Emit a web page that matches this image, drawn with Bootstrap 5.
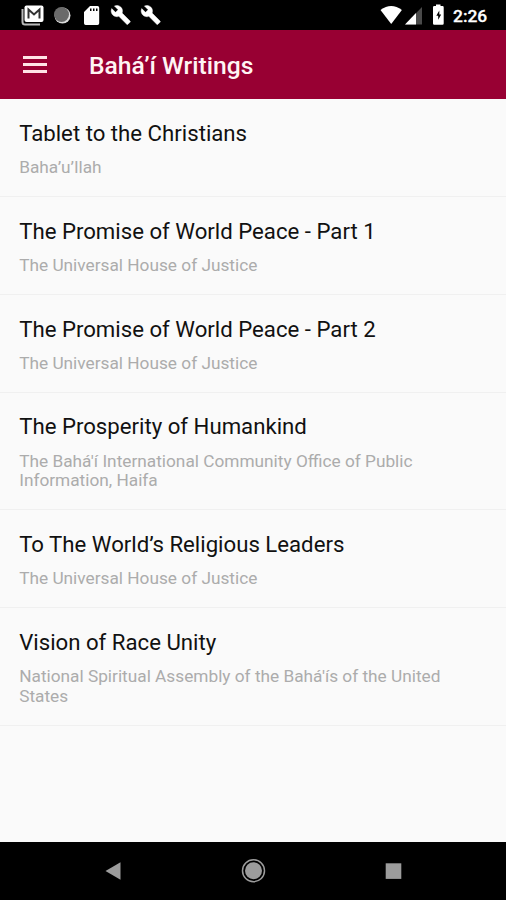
<!DOCTYPE html>
<html lang="en">
<head>
<meta charset="utf-8">
<meta name="viewport" content="width=device-width, initial-scale=1">
<title>Bahá’í Writings</title>
<link href="https://cdn.jsdelivr.net/npm/bootstrap@5.3.0/dist/css/bootstrap.min.css" rel="stylesheet">
<style>
  body { font-family: Roboto, "Liberation Sans", sans-serif; background: #fafafa; height: 900px; }
  .status-bar { height: 30px; background: #000; }
  .status-bar svg, .nav-keys svg { display: block; width: 100%; }
  .status-bar text { font-size: 17.4px; font-weight: 500; stroke: #fff; stroke-width: .3px; }
  .app-bar { height: 68.5px; background: #980033; padding: 3px 22px 0 23px; }
  .menu-btn { width: 24px; margin-top: -2px; }
  .app-title { font-size: 24.65px; font-weight: 500; line-height: 30px; margin-left: 42px; color: #fff4f4; }
  .writings { padding-top: .9px; }
  .writing { padding: 20.7px 19px 18.1px 19.2px; border-bottom: 1px solid #f0f0f0; }
  .writing-title { font-size: 22.2px; line-height: 26px; margin-bottom: 12.2px; color: #111; }
  .writing-author { font-size: 17.25px; line-height: 19.8px; color: #acacac; }
  .nav-keys { height: 58px; background: #000; }
</style>
</head>
<body class="d-flex flex-column overflow-hidden">
  <div class="status-bar flex-shrink-0">
    <svg height="30" viewBox="0 0 506 30" fill="#fff">
      <path d="M22.500 9v13q0 2.500 2.500 2.500H40" fill="none" stroke="#bbb" stroke-width="2"/>
      <rect x="24.500" y="5.500" width="19" height="16.500" rx="2"/>
      <path d="M28.500 18.500V9.500l5.500 5 5.500-5v9" fill="none" stroke="#333" stroke-width="2"/>
      <circle cx="62.500" cy="15.500" r="8" fill="#ddd"/>
      <circle cx="61.500" cy="14.500" r="7.500" fill="#6a6a6a"/>
      <path fill-rule="evenodd" d="M90 6h7.500q1.700 0 1.700 1.700v15.600q0 1.700-1.700 1.700H85.700q-1.700 0-1.700-1.700V12zM90 8.500v2.500h1.500V8.500zm3 0v2.500h1.500V8.500zm3 0v2.500h1.500V8.500z"/>
      <path id="wrench" transform="translate(110.300 4.500) scale(.87)" stroke="#fff" stroke-width=".5" d="M22.700 19l-9.100-9.100c.9-2.300.4-5-1.500-6.900-2-2-5-2.400-7.400-1.300L9 6 6 9 1.600 4.700C.4 7.100.9 10.100 2.900 12.100c1.900 1.900 4.600 2.400 6.900 1.500l9.100 9.100c.4.400 1 .4 1.400 0l2.300-2.300c.5-.4.500-1.100.1-1.400z"/>
      <use href="#wrench" x="30"/>
      <path d="M380.500 10q10.700-8 21.400 0L391.200 24z"/>
      <path d="M422 7v17.500h-17z" fill="#4a4a4a"/>
      <path d="M416 13v11.500h-11z"/>
      <path fill-rule="evenodd" d="M436 6v-1.500h4.500V6h2q1.200 0 1.200 1.200v16.300q0 1.200-1.200 1.200h-8.300q-1.200 0-1.200-1.200V7.200Q433 6 434.200 6zm3.300 4.500l-3 5.200h1.900v4l3-5.200h-1.900z"/>
      <text x="453" y="22">2:26</text>
    </svg>
  </div>

  <nav class="app-bar d-flex align-items-center flex-shrink-0">
    <button class="menu-btn btn p-0 border-0 d-flex" aria-label="Menu">
      <svg width="24" height="18" viewBox="0 0 24 18" fill="#ffe3e6"><path d="M0 0h24v3H0zM0 7h24v3H0zM0 14h24v3H0z"/></svg>
    </button>
    <h1 class="app-title mb-0">Bahá’í Writings</h1>
  </nav>

  <main class="flex-grow-1">
    <ul class="writings list-unstyled mb-0">
      <li class="writing"><h2 class="writing-title fw-normal">Tablet to the Christians</h2><p class="writing-author mb-0">Baha’u’llah</p></li>
      <li class="writing"><h2 class="writing-title fw-normal">The Promise of World Peace - Part 1</h2><p class="writing-author mb-0">The Universal House of Justice</p></li>
      <li class="writing"><h2 class="writing-title fw-normal">The Promise of World Peace - Part 2</h2><p class="writing-author mb-0">The Universal House of Justice</p></li>
      <li class="writing"><h2 class="writing-title fw-normal">The Prosperity of Humankind</h2><p class="writing-author mb-0">The Bahá'í International Community Office of Public Information, Haifa</p></li>
      <li class="writing"><h2 class="writing-title fw-normal">To The World’s Religious Leaders</h2><p class="writing-author mb-0">The Universal House of Justice</p></li>
      <li class="writing"><h2 class="writing-title fw-normal">Vision of Race Unity</h2><p class="writing-author mb-0">National Spiritual Assembly of the Bahá'ís of the United States</p></li>
    </ul>
  </main>

  <footer class="nav-keys flex-shrink-0">
    <svg height="58" viewBox="0 0 506 58" fill="#9c9c9c">
      <path d="M105.500 29l15-8.700v17.400z"/>
      <circle cx="253.500" cy="28.700" r="8.500"/>
      <circle cx="253.500" cy="28.700" r="11" fill="none" stroke="#9c9c9c" stroke-width="1.500"/>
      <rect x="385.700" y="21.300" width="15.600" height="15.600"/>
    </svg>
  </footer>
<script src="https://cdn.jsdelivr.net/npm/bootstrap@5.3.0/dist/js/bootstrap.bundle.min.js"></script>
</body>
</html>
